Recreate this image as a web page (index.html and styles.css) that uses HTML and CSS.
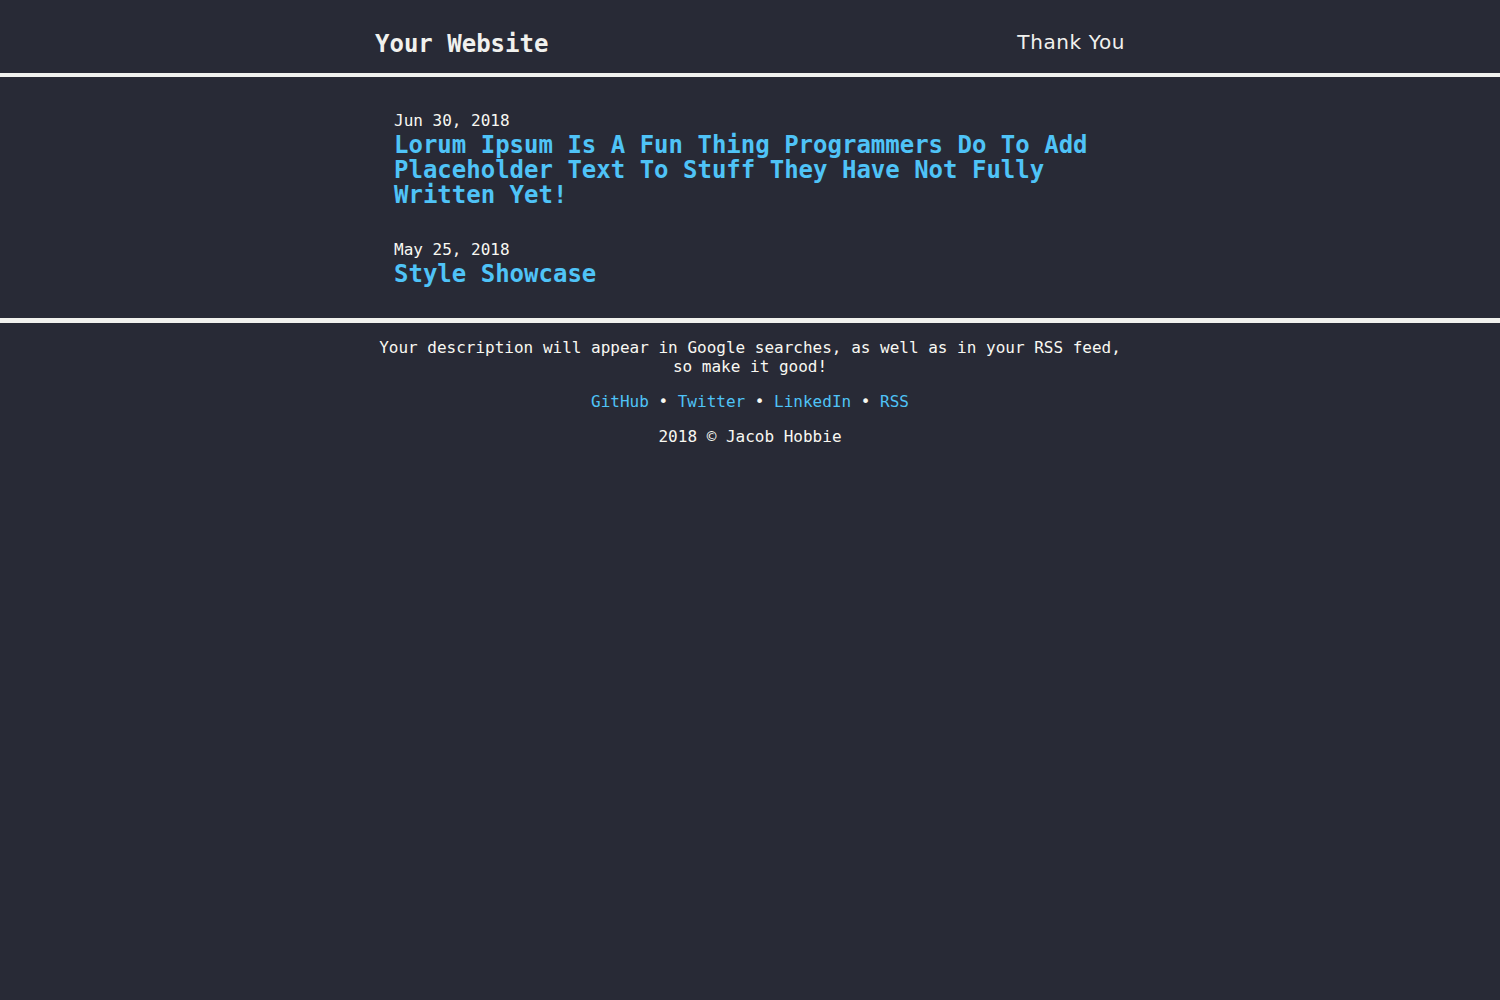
FILE: index.html
```html
<!DOCTYPE html>
<html lang="en">
<head>
<meta charset="utf-8">
<title>Your Website</title>
<link rel="stylesheet" href="styles.css">
</head>
<body>
<header class="site-header">
  <div class="header-inner">
    <a class="site-title" href="#">Your Website</a>
    <nav class="site-nav"><a href="#">Thank You</a></nav>
  </div>
</header>
<main class="posts">
  <article class="post">
    <div class="post-date">Jun 30, 2018</div>
    <a class="post-title" href="#">Lorum Ipsum Is A Fun Thing Programmers Do To Add Placeholder Text To Stuff They Have Not Fully Written Yet!</a>
  </article>
  <article class="post">
    <div class="post-date">May 25, 2018</div>
    <a class="post-title" href="#">Style Showcase</a>
  </article>
</main>
<footer class="site-footer">
  <p class="desc">Your description will appear in Google searches, as well as in your RSS feed,<br>so make it good!</p>
  <p class="links"><a href="#">GitHub</a> • <a href="#">Twitter</a> • <a href="#">LinkedIn</a> • <a href="#">RSS</a></p>
  <p class="copy">2018 © Jacob Hobbie</p>
</footer>
</body>
</html>
```
FILE: styles.css
```css
html, body {
  margin: 0;
  padding: 0;
  background: #282a36;
  color: #f8f8f2;
  font-family: "DejaVu Sans Mono", monospace;
}
a { text-decoration: none; }
.site-header {
  border-bottom: 4px solid #f1f1ee;
}
.header-inner {
  width: 750px;
  margin: 0 auto;
  height: 73px;
  display: flex;
  justify-content: space-between;
  align-items: center;
}
.site-title {
  color: #f1f1ee;
  font-weight: bold;
  font-size: 24px;
  padding-top: 14px;
}
.site-nav a {
  color: #f1f1ee;
  font-family: "DejaVu Sans", sans-serif;
  font-size: 20px;
  letter-spacing: 0.6px;
  padding-top: 11px;
  display: block;
}
.posts {
  width: 712px;
  margin: 0 auto;
  padding-top: 34px;
  padding-bottom: 31px;
  display: flex;
  flex-direction: column;
  gap: 32px;
}
.post { display: flex; flex-direction: column; gap: 2px; }
.post-date {
  font-size: 16px;
  line-height: 20px;
  color: #f8f8f2;
}
.post-title {
  color: #4fc3f7;
  font-weight: bold;
  font-size: 24px;
  line-height: 25px;
}
.site-footer {
  border-top: 5px solid #f1f1ee;
  text-align: center;
  padding-top: 15px;
  font-size: 16px;
  line-height: 19px;
}
.site-footer p { margin: 0 0 16px; }
.links a { color: #4fc3f7; }
```
